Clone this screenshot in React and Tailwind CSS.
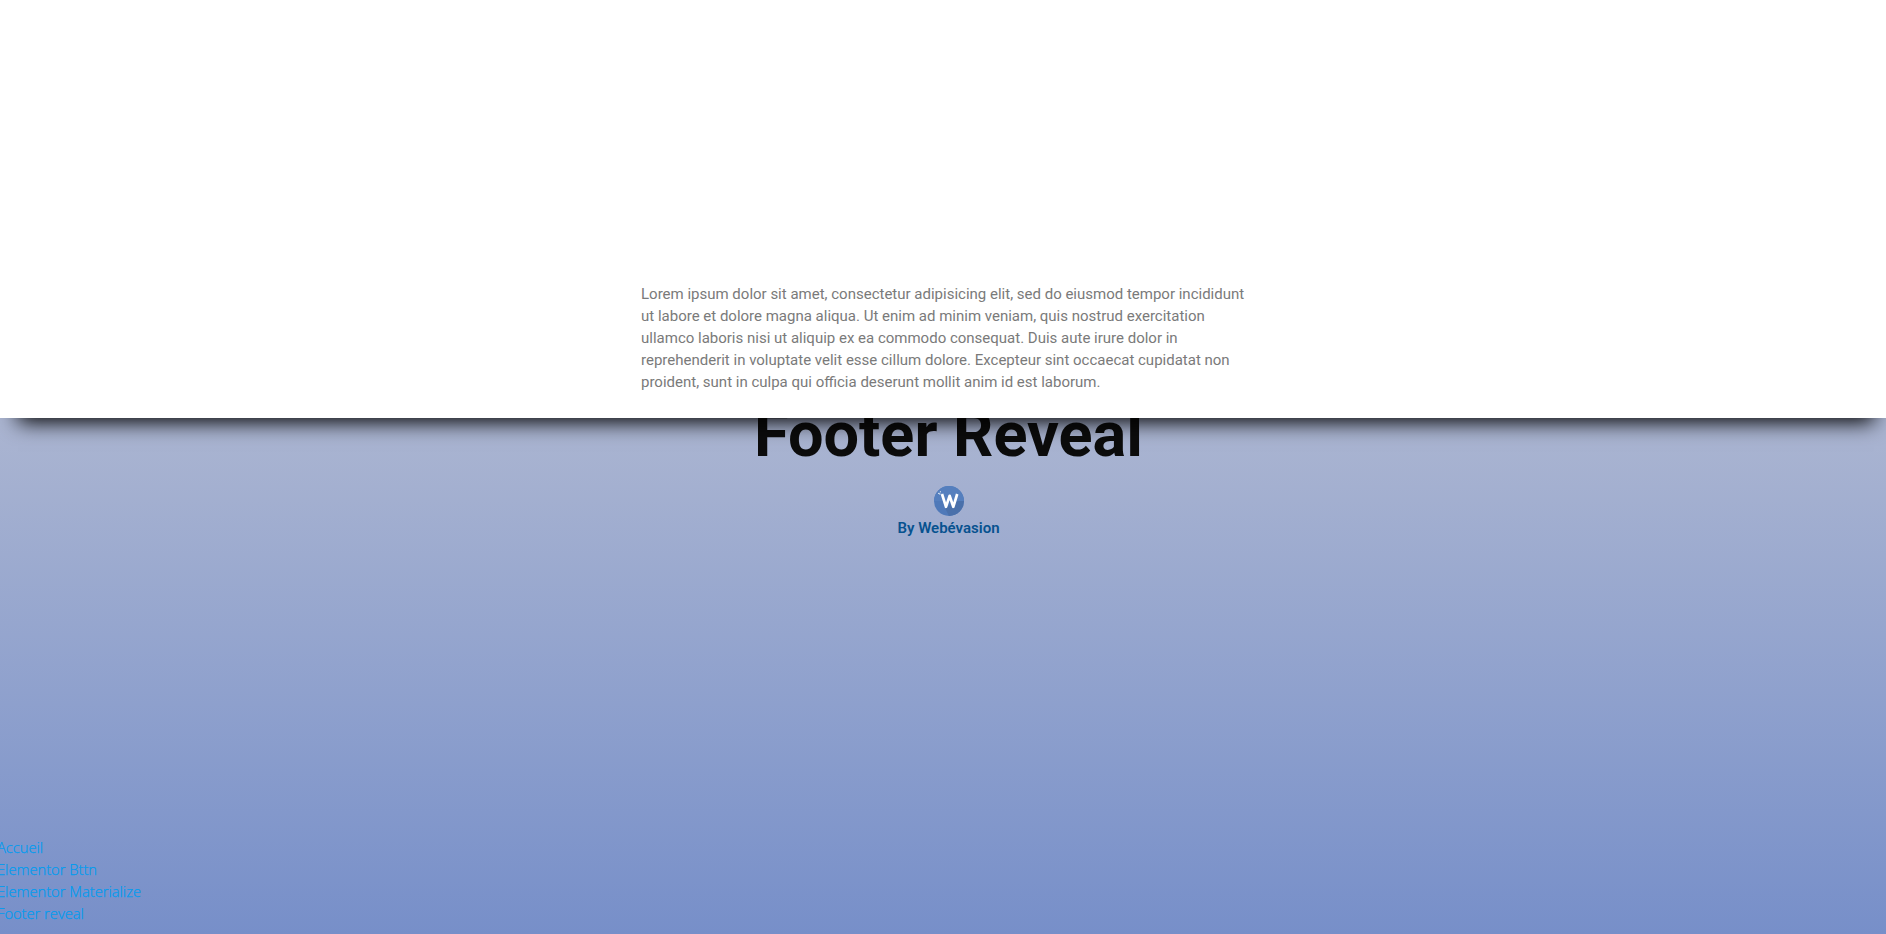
const links = ['Accueil', 'Elementor Bttn', 'Elementor Materialize', 'Footer reveal'];

function Logo() {
  return (
    <svg viewBox="0 0 30 30" className="block h-[30px] w-[30px]">
      <defs>
        <clipPath id="disc"><circle cx="15" cy="15" r="15" /></clipPath>
      </defs>
      <g clipPath="url(#disc)">
        <rect width="30" height="30" fill="#4f79b9" />
        <rect width="30" height="15" fill="#557fbe" />
        <path d="M11 22 L24 15 H30 V30 H15 Z" fill="#4a70aa" />
      </g>
      <path d="M8 8 L12 20.8 L15.6 9.8 L19.3 20.8 L23.2 8" fill="none" stroke="#fff" strokeWidth="2.7" strokeLinejoin="round" strokeLinecap="butt" />
      <path d="M4 7.4h1.8M6.4 5.2v1.2M5.6 8.8l1.2-1.2" stroke="#dfe9f6" strokeWidth="1" />
    </svg>
  );
}

export default function App() {
  return (
    <div className="flex h-[934px] w-full flex-col overflow-hidden bg-white font-['Roboto',sans-serif]">
      <main className="relative z-10 flex h-[418px] shrink-0 justify-center bg-white pt-[283px] shadow-[3px_19px_20px_-15px_#000]">
        <p className="w-[604px] text-[15px] leading-[22px] text-[#7a7a7a]">
          Lorem ipsum dolor sit amet, consectetur adipisicing elit, sed do eiusmod tempor incididunt<br />
          ut labore et dolore magna aliqua. Ut enim ad minim veniam, quis nostrud exercitation<br />
          ullamco laboris nisi ut aliquip ex ea commodo consequat. Duis aute irure dolor in<br />
          reprehenderit in voluptate velit esse cillum dolore. Excepteur sint occaecat cupidatat non<br />
          proident, sunt in culpa qui officia deserunt mollit anim id est laborum.
        </p>
      </main>
      <footer className="flex grow flex-col bg-linear-to-b from-[#abb5d1] to-[#778fc9]">
        <div className="flex flex-col items-center pl-[11px]">
          <h1 className="-mt-[22px] h-[90px] text-[63px] leading-[77px] font-bold whitespace-nowrap text-[#0c0c0c]">Footer Reveal</h1>
          <Logo />
          <p className="mt-px text-[15px] leading-[22px] font-semibold text-[#07528f]">By Webévasion</p>
        </div>
        <nav className="mt-auto mb-[10px] -ml-[3px] flex flex-col font-['Open_Sans',sans-serif] text-[14.7px] leading-[22px] font-light text-[#009cf0] [-webkit-text-stroke:0.25px_#009cf0]">
          {links.map((label) => <a key={label}>{label}</a>)}
        </nav>
      </footer>
    </div>
  );
}
